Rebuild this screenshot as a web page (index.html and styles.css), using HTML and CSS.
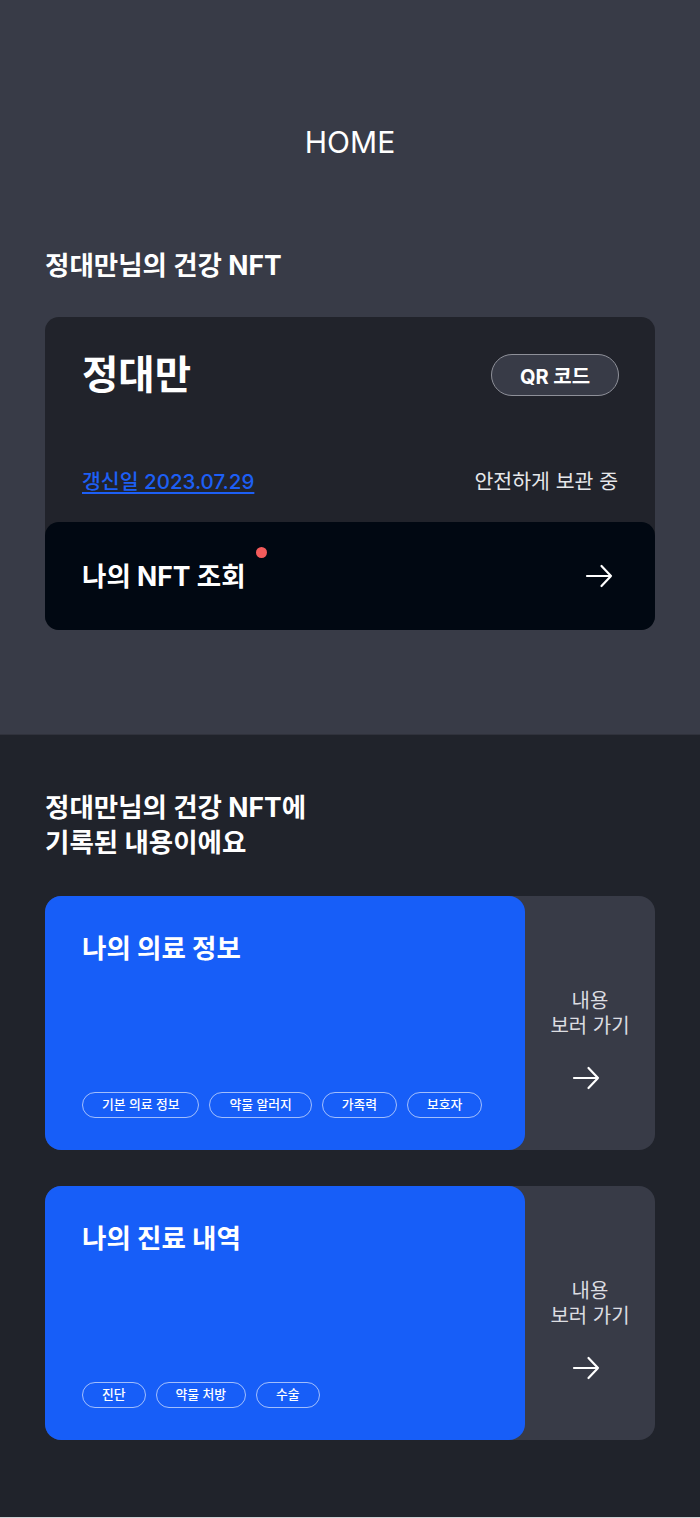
FILE: index.html
```html
<!DOCTYPE html>
<html lang="ko">
<head>
<meta charset="utf-8">
<title>HOME</title>
<link rel="stylesheet" href="styles.css">
</head>
<body>
<div class="page">
  <section class="top">
    <header class="header">HOME</header>
    <h2 class="sec-title">정대만님의 건강 NFT</h2>
    <div class="nft-card">
      <div class="nft-info">
        <div class="row-name">
          <span class="name">정대만</span>
          <button class="qr-btn">QR 코드</button>
        </div>
        <div class="row-meta">
          <a class="renew" href="#">갱신일 2023.07.29</a>
          <span class="status">안전하게 보관 중</span>
        </div>
      </div>
      <div class="nft-view">
        <span class="view-label">나의 NFT 조회<span class="dot"></span></span>
        <svg class="arrow" width="28" height="24" viewBox="0 0 28 24"><path d="M2 12H26M16.5 2L26 12L16.5 22" fill="none" stroke="#fff" stroke-width="2.2" stroke-linecap="round" stroke-linejoin="round"/></svg>
      </div>
    </div>
  </section>
  <section class="bottom">
    <h2 class="sec-title two">정대만님의 건강 NFT에<br>기록된 내용이에요</h2>
    <div class="rec-card">
      <div class="rec-main">
        <h3 class="rec-title">나의 의료 정보</h3>
        <div class="tags">
          <span class="tag">기본 의료 정보</span>
          <span class="tag">약물 알러지</span>
          <span class="tag">가족력</span>
          <span class="tag">보호자</span>
        </div>
      </div>
      <div class="rec-side">
        <span class="side-text">내용<br>보러 가기</span>
        <svg class="arrow side-arrow" width="28" height="24" viewBox="0 0 28 24"><path d="M2 12H26M16.5 2L26 12L16.5 22" fill="none" stroke="#fff" stroke-width="2.2" stroke-linecap="round" stroke-linejoin="round"/></svg>
      </div>
    </div>
    <div class="rec-card">
      <div class="rec-main">
        <h3 class="rec-title">나의 진료 내역</h3>
        <div class="tags">
          <span class="tag">진단</span>
          <span class="tag">약물 처방</span>
          <span class="tag">수술</span>
        </div>
      </div>
      <div class="rec-side">
        <span class="side-text">내용<br>보러 가기</span>
        <svg class="arrow side-arrow" width="28" height="24" viewBox="0 0 28 24"><path d="M2 12H26M16.5 2L26 12L16.5 22" fill="none" stroke="#fff" stroke-width="2.2" stroke-linecap="round" stroke-linejoin="round"/></svg>
      </div>
    </div>
  </section>
</div>
</body>
</html>
```

FILE: styles.css
```css
* { box-sizing: border-box; }
html, body { margin: 0; padding: 0; }
body {
  font-family: Inter, "Noto Sans CJK KR", sans-serif;
  color: #fff;
  background: #20232b;
  width: 700px;
}
.page { display: flex; flex-direction: column; }

.top {
  background: #383b47;
  height: 735px;
  padding: 0 45px;
  border-bottom: 1px solid #30323c;
}
.header {
  padding-top: 122px;
  line-height: 40px;
  font-size: 30px;
  font-weight: 400;
  text-align: center;
}
.sec-title {
  margin: 88px 0 0;
  font-size: 26.5px;
  line-height: 30px;
  font-weight: 700;
}
.sec-title.two { margin: 0; line-height: 35px; }

.nft-card {
  margin-top: 37px;
  background: #21232b;
  border-radius: 14px;
  display: flex;
  flex-direction: column;
}
.nft-info { padding: 37px 36px 27px 37px; }
.row-name {
  display: flex;
  justify-content: space-between;
  align-items: center;
  height: 42px;
}
.name { font-size: 39.5px; font-weight: 700; line-height: 42px; }
.qr-btn {
  width: 128px;
  height: 42px;
  border-radius: 21px;
  border: 1.5px solid #8e9099;
  background: #383b47;
  color: #fff;
  font-family: Inter, "Noto Sans CJK KR", sans-serif;
  font-size: 20px;
  font-weight: 700;
}
.row-meta {
  margin-top: 73px;
  display: flex;
  justify-content: space-between;
  align-items: center;
  line-height: 26px;
  font-size: 20.5px;
}
.renew {
  color: #1d5ff5;
  font-weight: 500;
  text-decoration: underline;
  text-decoration-thickness: 2px;
  text-underline-offset: 3px;
}
.status { color: #e6e7ea; margin-right: 1px; }

.nft-view {
  height: 108px;
  background: #010812;
  border-radius: 14px;
  display: flex;
  align-items: center;
  justify-content: space-between;
  padding: 0 42px 0 37px;
}
.view-label {
  position: relative;
  font-size: 26.5px;
  font-weight: 700;
  line-height: 30px;
}
.dot {
  position: absolute;
  right: -21px;
  top: -14px;
  width: 11px;
  height: 11px;
  border-radius: 50%;
  background: #f45b5b;
}

.bottom {
  padding: 55px 45px 77px;
  display: flex;
  flex-direction: column;
  gap: 36px;
  border-bottom: 1px solid #cfd0d3;
}
.rec-card {
  height: 254px;
  display: flex;
  background: #383b47;
  border-radius: 16px;
}
.rec-main {
  width: 480px;
  background: #175ef8;
  border-radius: 16px;
  padding: 35px 37px 32px;
  display: flex;
  flex-direction: column;
  justify-content: space-between;
}
.rec-title { margin: 0; font-size: 26.5px; line-height: 34px; font-weight: 700; }
.tags { display: flex; gap: 10px; }
.tag {
  height: 26px;
  line-height: 24px;
  padding: 0 19px;
  border: 1px solid rgba(255,255,255,0.6);
  border-radius: 13px;
  font-size: 12.8px;
  font-weight: 500;
}
.rec-side {
  flex: 1;
  display: flex;
  flex-direction: column;
  align-items: center;
  padding-top: 93px;
  gap: 27px;
}
.side-text {
  text-align: center;
  font-size: 20px;
  line-height: 25px;
  color: #dcdde1;
}
.side-arrow { margin-right: 8px; }
```
